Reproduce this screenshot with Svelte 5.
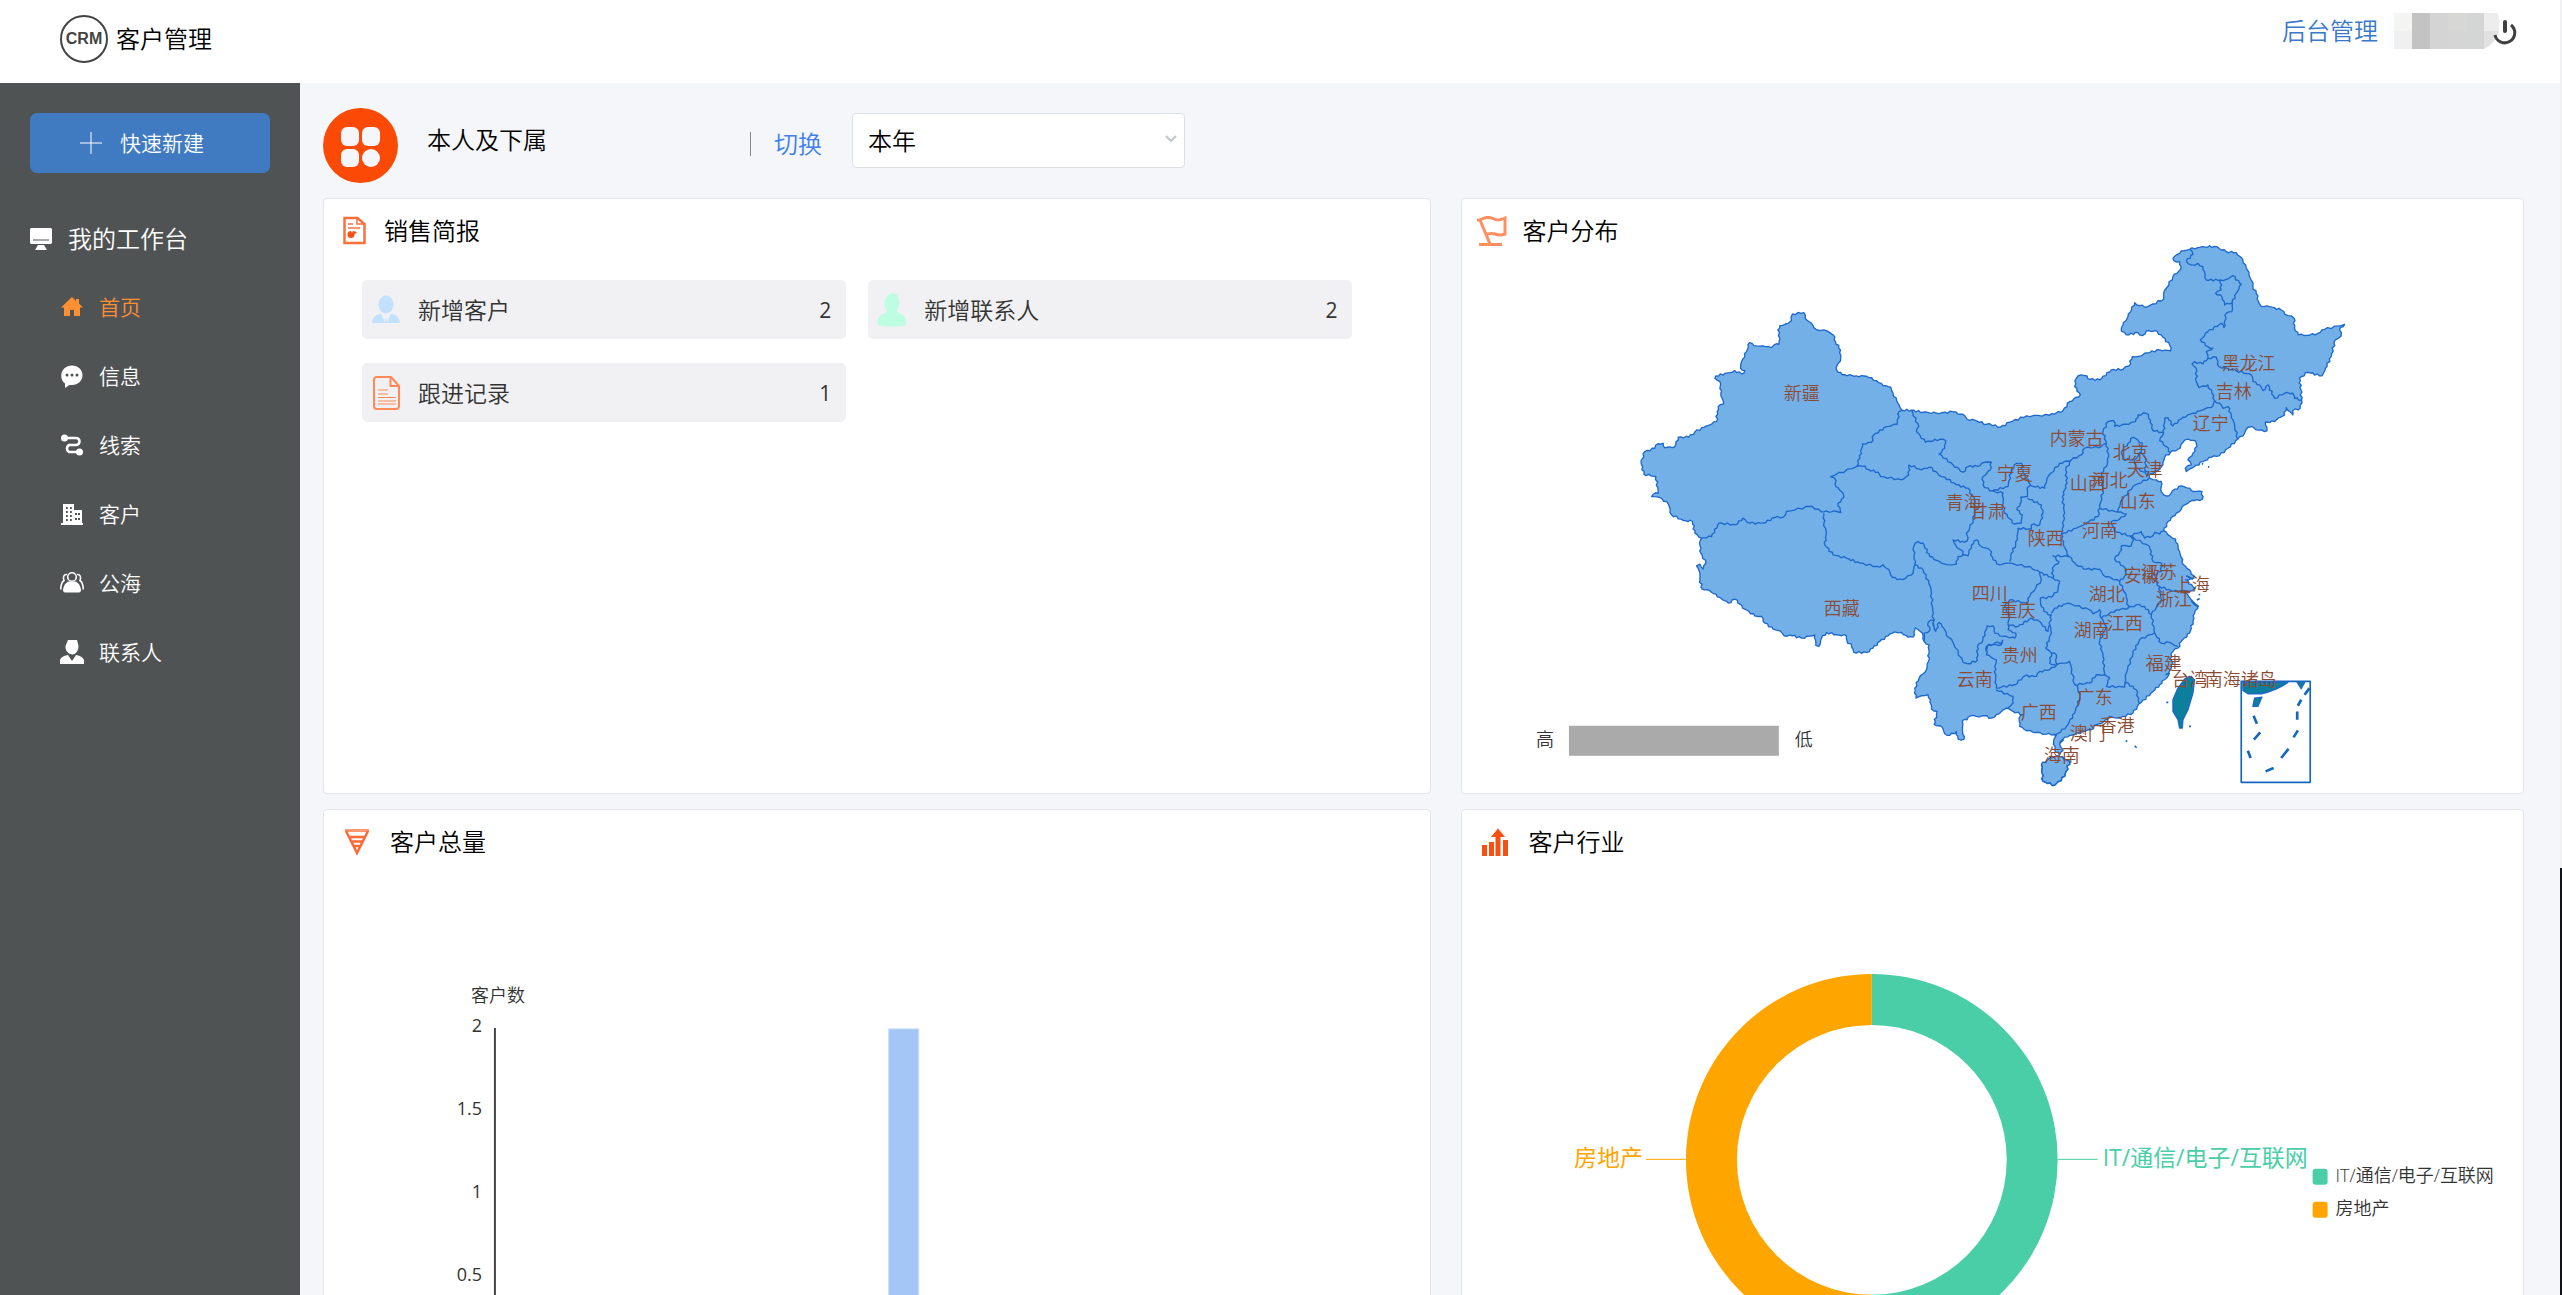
<script lang="ts">
	type Point = [number, number];
	type Run = [dx: number, dy: number, points: string];

	const menu = [
		{ id: 'home', label: '首页' },
		{ id: 'message', label: '信息' },
		{ id: 'clue', label: '线索' },
		{ id: 'customer', label: '客户' },
		{ id: 'pool', label: '公海' },
		{ id: 'contact', label: '联系人' }
	];
	let active = $state('home');

	const stats = [
		{ icon: 'customer', label: '新增客户', value: 2 },
		{ icon: 'contact', label: '新增联系人', value: 2 },
		{ icon: 'record', label: '跟进记录', value: 1 }
	];

	const ranges = ['本年', '本季度', '本月', '本周'];
	let range = $state('本年');

	const ticks = [2, 1.5, 1, 0.5, 0];

	const industries = [
		{ name: 'IT/通信/电子/互联网', color: '#4acea7' },
		{ name: '房地产', color: '#ffa500' }
	];

	const provinces: [string, number, number][] = [
		['新疆', 340, 147],
		['西藏', 380, 362],
		['青海', 502, 256],
		['甘肃', 526, 265],
		['宁夏', 553, 227],
		['内蒙古', 615, 192],
		['北京', 669, 206],
		['天津', 683, 223],
		['山西', 626, 237],
		['河北', 648, 234],
		['山东', 676, 255],
		['黑龙江', 787, 117],
		['吉林', 772, 145],
		['辽宁', 749, 177],
		['河南', 638, 284],
		['陕西', 584, 292],
		['四川', 528, 347],
		['重庆', 556, 364],
		['湖北', 645, 348],
		['安徽', 680, 329],
		['江苏', 697, 326],
		['上海', 730, 338],
		['浙江', 712, 353],
		['江西', 663, 377],
		['湖南', 630, 384],
		['贵州', 558, 409],
		['云南', 513, 433],
		['福建', 702, 417],
		['台湾', 728, 433],
		['南海诸岛', 779, 433],
		['广东', 633, 451],
		['广西', 577, 466],
		['香港', 655, 479],
		['澳门', 626, 487],
		['海南', 600, 509]
	];

	// Map geometry is kept in tiles; each run carries the offset of its tile.
	const W: [number, number] = [0, 0];
	const N: [number, number] = [1020, 0];
	const S: [number, number] = [1020, 810];
	const Y: [number, number] = [780, 1080];

	const outline: Run[] = [
		[...W, '63,697 75,665 105,655 107,646 130,640 135,654 165,650 175,622 207,622 225,606 260,588 290,575 292,545 300,525 311,522 303,490 300,455 285,445 288,438 330,428 345,422 350,428 372,430 375,422 362,415 363,402 380,365 389,338 410,348 437,350 455,353 463,345 477,343 480,325 474,300 480,287 505,280 515,272 518,252 552,248 556,265 575,280 582,293 600,302 612,300 630,308 640,315 647,335 662,360 662,393 650,410 655,427 675,434 710,438 740,439 770,452 790,467 813,472 820,490 835,520 847,541 875,541 910,547 950,550 1000,546'],
		[...N, '15,557 22,568 45,571 80,583 107,585 122,592 150,577 200,558 270,556 310,542 330,515 362,495 345,470 350,445 365,435 382,438 385,447 420,450 455,420 490,418 508,408 518,380 545,378 555,370 600,360 633,363 630,345 605,315 585,302 560,303 548,317 535,308 500,315 485,303 490,285 505,260 525,218 540,227 562,231 580,222 612,208 612,190 640,140 663,118 660,95 643,92 640,85 665,63 690,58 720,52 765,49 800,65 830,68 850,90 863,120 875,150 880,170 890,190 897,215 905,229 930,230 965,240 985,257 1003,264 1005,295 1016,315 1050,316 1075,310 1095,298 1155,283 1140,300 1145,318 1127,330 1115,380 1098,415 1087,438 1045,427 1020,445 1024,480 1026,510 1022,535 1000,542 1000,555 990,545 980,533 975,555 955,565 945,575 917,577 922,603 890,600 878,590 865,592 855,610 835,628 805,655 780,677 755,682 730,695 697,715 680,725 677,715 695,705 685,690 700,670 712,650 708,633 685,628 670,637 662,655 632,668 615,682 610,705 595,722 568,735 570,745 590,750 605,755 605,785 612,795 628,798 645,778 665,768 690,775 700,785 727,785 728,808 705,812 690,815 675,825 665,838 650,850 625,875'],
		[...S, '613,93 630,108 648,118 660,155 672,195 690,210 703,235 678,240 705,265 690,275 672,272 683,283 700,305 715,318 705,340 700,365 690,400 665,425 655,445 640,455 630,478 640,490 632,510 628,525 615,540 600,555 580,575 545,608 533,620 520,640 490,650 470,655 450,650 430,668 410,675 395,690 375,695 330,707 310,718 300,735 310,752 300,765 285,750 282,725 290,705 260,703 200,693 180,680 178,655 190,645 160,635'],
		[...Y, '380,355 365,365 350,375 335,385 315,378 290,380 272,378 262,390 248,393 248,420 253,448 235,448 230,425 210,437 195,432 185,410 163,404 170,375 172,365 155,358 152,330 145,315 125,318 108,325 105,295 118,265 140,240 146,215 148,165 133,155 128,130 115,120 107,114 100,142 85,142 65,128 45,126 25,138 0,155'],
		[...W, '760,1255 740,1268 702,1268 695,1243 683,1240 680,1218 650,1215 620,1208 605,1225 597,1250 588,1247 585,1215 545,1225 510,1215 493,1218 480,1203 460,1198 430,1175 425,1160 405,1158 375,1138 345,1108 325,1120 300,1103 270,1083 247,1078 240,1050 240,1030 230,1008 240,1003 250,1018 258,1000 243,970 240,935 245,925 225,910 218,875 190,872 155,855 145,822 120,803 95,800 100,793 115,790 108,740 72,733 63,697']
	];

	const borders: Run[][] = [
		[[...W, '245,925 275,920 297,880 348,885 368,865 390,880 430,880 465,863 490,862 500,845 570,830 612,846 650,845 663,848 655,820 672,803 665,785 648,770 645,745 632,740 710,710 720,685 728,642 755,637 762,615 800,590 832,583 838,545 847,541']],
		[[...W, '612,850 612,880 620,910 615,945 640,975 680,985 720,1000 780,1012 790,1005 810,1025 818,1043 840,1048 858,1045 880,1030 885,1005 910,1020 932,1070 938,1130 942,1190']],
		[[...W, '710,710 735,708 740,718 775,727 783,740 845,750 867,735 868,705 905,720 930,712 965,740 975,742 1010,765 1045,775 1055,795 1062,800 1068,840 1060,870 1050,895 1040,910 1045,925 1035,937 1000,930 1010,950 1030,965 1025,980']],
		[[...W, '885,1005 882,950 895,935 910,940 930,980 965,1000 990,1005 1010,1003 1015,980 1030,975 1045,978 1055,945 1070,930 1082,948 1110,960'], [...S, '100,180 120,195 145,190 205,200 240,217 280,235']],
		[[...W, '875,541 897,590 890,605 917,637 960,628 978,632 975,655 958,672 1000,705 1030,727 1045,710'], [...N, '60,708 75,697 95,697 92,720 70,740 70,765 90,783 105,785 130,790 130,820 135,850 165,883 185,880 188,855 172,840 185,815 183,800']],
		[[...N, '98,783 145,770 155,720 170,700 185,700 190,730 213,765 202,775 203,800 183,803']],
		[[...N, '203,805 245,825 250,850 240,885 215,885 215,898 175,895'], [...S, '172,110 168,135 155,160 150,185']],
		[[...N, '213,768 255,775 262,745 300,700 335,690 365,675 375,655 425,650 440,640 430,605 445,575 462,572 465,590 500,583 528,575 535,555 560,550 573,570 578,600 612,610 615,565 625,563 640,588 670,562 700,550 730,540 760,528 765,512 757,490 745,465 718,473 710,455 710,415 697,402 705,395 730,402 745,385']],
		[[...N, '335,690 318,720 322,760 308,800 315,850 308,895'], [...S, '305,103 313,140 328,170 350,195 380,208 420,208 430,225 480,245 500,290 505,325']],
		[[...N, '612,610 600,632 620,650 632,668']],
		[[...N, '765,512 785,525 790,535 805,530 820,570 835,628']],
		[[...N, '745,385 740,365 760,355 745,350 722,330 745,305 785,280 793,293 800,250 817,245 818,218 795,225 787,200 768,190 785,180 782,150 740,150 730,110 715,100 695,105 680,93 700,73 690,58']],
		[[...N, '782,150 800,148 820,137 845,163 830,190 818,218']],
		[[...N, '745,385 770,382 778,410 830,422 875,435 880,455 900,465 910,482 925,465 945,505 975,490 1000,490 1005,505 1026,510']],
		[[...N, '440,640 447,680 440,710 425,730 430,780 420,835 415,860 380,880 360,890'], [...S, '350,85 305,103']],
		[[...N, '420,835 475,847 483,815 520,770 568,745']],
		[[...N, '475,847 500,852 480,868 455,875'], [...S, '465,95 510,108 545,95 555,115 580,108 585,98 600,103 613,93']],
		[[...N, '485,665 505,640 520,622 548,640 545,665 525,690 490,688 485,665']],
		[[...N, '545,665 560,690 555,715 568,735']],
		[[...N, '525,690 530,715 568,735']],
		[[...S, '480,245 500,225 497,205 465,178 485,150 485,138 515,138 522,120 510,108 570,140 580,185 605,190 605,215 575,230 600,260 640,275 672,272']],
		[[...S, '328,170 280,168 298,185 278,205 280,235 300,245 295,270 275,292 242,295 245,320 265,345 275,345 270,375 275,400 258,445 275,460 270,490 290,500']],
		[[...S, '275,340 285,325 325,310 390,330 400,342 420,330 425,355 470,330 505,325 530,315 555,320 575,345 585,400 605,430 630,428 655,440']],
		[[...S, '600,260 605,300 575,345']],
		[[...S, '585,398 540,420 520,460 500,520 495,550']],
		[[...S, '425,355 440,380 420,425 430,470 435,525 450,535 440,560 495,562 500,548 530,570 538,610']],
		[[...S, '435,525 410,525 390,550 345,555 330,485 310,490 290,495 270,510 240,515 230,530 195,528 165,555 125,562 110,565 108,540 105,500 110,480 80,465 80,440 105,430 130,428']],
		[[...S, '275,460 290,465 288,480 295,495']],
		[[...S, '108,570 160,590 160,610 140,628']],
		[[...S, '350,555 362,590 345,640 320,680 285,710']],
		[[...Y, '160,100 168,125 178,98 192,115 205,142 215,148 250,218 265,222 293,212 293,170 310,150 322,108 340,108 345,130 370,140 405,145 408,130 385,120 385,105']],
		[[...Y, '370,150 365,165 325,165 318,185']],
		[[...Y, '162,90 145,98 150,122 133,130 133,155']],
		[[...S, '240,217 245,240 210,290 200,310 150,300 135,320 150,350 145,375 175,380 215,355 240,365 265,395 270,375']],
		[[...S, '245,795 275,772 300,770 330,785 315,830 285,857 250,845 245,795']]
	];

	const island: Run[] = [
		[...S, '690,530 705,540 700,580 685,630 670,660 668,685 660,685 655,660 640,635 640,600 655,565 675,538 690,530']
	];

	function points(runs: Run[]): Point[] {
		return runs.flatMap(([dx, dy, list]) =>
			list.split(' ').map((pair): Point => {
				const [x, y] = pair.split(',').map(Number);
				return [x + dx, y + dy];
			})
		);
	}

	// Breaks long straight segments into a slightly ragged line.
	function rough(runs: Run[]): string {
		const list = points(runs);
		const out: string[] = [`M${list[0]}`];
		for (let i = 1; i < list.length; i++) {
			const [ax, ay] = list[i - 1];
			const [bx, by] = list[i];
			const len = Math.hypot(bx - ax, by - ay) || 1;
			const steps = Math.min(6, Math.floor(len / 7));
			for (let s = 1; s < steps; s++) {
				const t = s / steps;
				const off = Math.sin(ax * 12.9 + by * 7.3 + s * 91.7) * 3;
				const x = ax + (bx - ax) * t - ((by - ay) / len) * off;
				const y = ay + (by - ay) * t + ((bx - ax) / len) * off;
				out.push(`L${x.toFixed(1)},${y.toFixed(1)}`);
			}
			out.push(`L${bx},${by}`);
		}
		return out.join('');
	}

	const landPath = rough(outline);
	const hainanPath = rough(borders[borders.length - 1]);
	const borderPath = borders.map(rough).join('');
	const islandPath = `M${points(island).join('L')}z`;
</script>

{#snippet menuIcon(id: string)}
	<svg class="menu-icon" viewBox="0 0 24 24" fill="currentColor" aria-hidden="true">
		{#if id === 'home'}
			<path d="M12 2 1 12.500h3V21h6v-6h4v6h6v-8.500h3L19 8.500V4h-3v2z" />
		{:else if id === 'message'}
			<path d="M12 1.500c6 0 10.500 4.300 10.500 9.700S18 21 12 21c-1 0-2 0-3 .2L5 24v-4.500c-2.500-1.800-4-5-3.700-8.300C1.500 5.800 6 1.500 12 1.500z" />
			<g fill="#505354">
				<circle cx="7" cy="11" r="1.500" />
				<circle cx="12" cy="11" r="1.500" />
				<circle cx="17" cy="11" r="1.500" />
			</g>
		{:else if id === 'clue'}
			<circle cx="4.500" cy="5" r="3.500" />
			<circle cx="19.500" cy="19" r="3.500" />
			<path d="M5 5h11a3.500 3.500 0 0 1 0 7H9a4 4 0 0 0 0 7h10" fill="none" stroke="currentColor" stroke-width="2.600" />
		{:else if id === 'customer'}
			<path d="M3 2h11v6h8v13h1v2H1v-2h2z" />
			<path d="M6 5h1.800v2H6zm4 0h1.800v2H10zM6 9h1.800v2H6zm4 0h1.800v2H10zm-4 4h1.800v2H6zm4 0h1.800v2H10zm-4 4h1.800v2H6zm4 0h1.800v2H10zm5-6h2v2h-2zm3 0h2v2h-2zm-3 5h2v2h-2zm3 0h2v2h-2z" fill="#505354" />
		{:else if id === 'pool'}
			<g fill="none" stroke="currentColor" stroke-width="1.600">
				<circle cx="12" cy="6" r="4.300" />
				<path d="M7 3.500C4 3 2.500 6 4 9.500 1.500 11 .8 14 .8 18.500M17 3.500c3-.5 4.500 2.500 3 6 2.500 1.500 3.200 4.500 3.200 9" />
			</g>
			<path d="M3 20c0-5 3-9 6-9.500h6c3 .5 6 4.500 6 9.500l-1.500 1.500h-15z" />
		{:else}
			<path d="M8 0h9l1.500 6c0 4-2 8-6 8.500C8.500 14 5 11 5.500 6z" />
			<path d="M0 24v-4c1-3 5-4.500 8-5l4 6 4-6c3 .5 7 2 8 5v4z" />
		{/if}
	</svg>
{/snippet}

{#snippet statIcon(id: string)}
	<svg class="stat-icon" viewBox="0 0 30 36" aria-hidden="true">
		{#if id === 'customer'}
			<g fill="#c2e0ff">
				<ellipse cx="15" cy="12.500" rx="7.500" ry="9" />
				<path d="M1 31c.3-5 3-8 9-9.500l4 9 1-6 1 6 4-9c6 1.500 8.700 4.500 9 9.500z" />
			</g>
		{:else if id === 'contact'}
			<path d="M12 2.500c2-2 8-1.500 9 2 1 4 3 8-1 13.500-1 4 9.500 3 9.500 12 0 4-3 4.500-14.500 4.500S.5 34 .5 30c0-9 10.500-8 9.500-12-4-5.500-4-10 2-15.500z" fill="#bdfde2" />
		{:else}
			<g fill="none" stroke="#ff8a57" stroke-width="2">
				<path d="M6 2h14l8 9v20a3 3 0 0 1-3 3H6a3 3 0 0 1-3-3V5a3 3 0 0 1 3-3z" />
				<path d="M19.500 2v9H28" />
				<path d="M7 15h10M7 19h10M7 22.500h18M7 26h18M7 29h18" stroke-width="1.200" />
			</g>
		{/if}
	</svg>
{/snippet}

<div class="window">
	<div class="app">
		<header class="topbar">
			<div class="brand">
				<span class="brand-mark">CRM</span>
				<span>客户管理</span>
			</div>
			<div class="account">
				<a href="#admin">后台管理</a>
				<svg class="account-name" viewBox="0 0 106 36" aria-hidden="true">
					<path d="M0 36V6q1-6 6-6v36z" fill="#fbfdfe" />
					<path d="M6 0h18v18H6z" fill="#f4f4f3" />
					<path d="M6 18h18v18H6z" fill="#f0f0f0" />
					<path d="M24 0h18v36H24z" fill="#c3c3c3" />
					<path d="M42 0h18v36H42z" fill="#d4d4d4" />
					<path d="M60 0h18v18H60z" fill="#d7d7d5" />
					<path d="M60 18h18v18H60z" fill="#d5d5d5" />
					<path d="M78 0h18v36H78z" fill="#d4d6d6" />
					<path d="M96 0h14q2 9 1 18H96z" fill="#ededed" />
					<path d="M96 18h15q-4 13-15 18z" fill="#e1e1e1" />
				</svg>
				<button class="logout" aria-label="退出">
					<svg viewBox="0 0 22 26" fill="none" stroke="#404040" aria-hidden="true">
						<path d="M11 4v9" stroke-width="4" stroke-linecap="round" />
						<path d="M17 7a10 10 0 1 1-16 10" stroke-width="3" />
					</svg>
				</button>
			</div>
		</header>

		<nav class="sidebar">
			<button class="create">
				<svg viewBox="0 0 22 22" stroke="#fff" stroke-width="1" aria-hidden="true">
					<path d="M11 0v22M0 11h22" />
				</svg>
				快速新建
			</button>
			<h2 class="menu-title">
				<svg viewBox="0 0 22 22" aria-hidden="true">
					<path d="M1 0h20l1 1v14l-1 1H1l-1-1V1z" fill="#fff" />
					<path d="M3 12h16" stroke="#505354" stroke-width="1" />
					<path d="M8 17h6l3 5H5z" fill="#fff" />
				</svg>
				我的工作台
			</h2>
			<ul class="menu">
				{#each menu as item (item.id)}
					<li>
						<a
							href="#{item.id}"
							class:active={active === item.id}
							onclick={() => (active = item.id)}
						>
							{@render menuIcon(item.id)}
							{item.label}
						</a>
					</li>
				{/each}
			</ul>
		</nav>

		<main class="content">
			<div class="toolbar">
				<svg class="scope-icon" viewBox="0 0 75 75" aria-hidden="true">
					<circle cx="37.500" cy="37.500" r="37.500" fill="#fa4a05" />
					<g fill="#f5f6fa">
						<rect x="18" y="19" width="18" height="19" rx="6" />
						<rect x="39" y="19" width="18" height="19" rx="6" />
						<rect x="18" y="41" width="18" height="18" rx="6" />
						<rect x="39" y="41" width="18" height="18" rx="9" />
					</g>
				</svg>
				<span class="scope">本人及下属</span>
				<a class="switch" href="#switch">切换</a>
				<div class="range">
					<select aria-label="时间范围" bind:value={range}>
						{#each ranges as item (item)}
							<option>{item}</option>
						{/each}
					</select>
					<svg viewBox="0 0 12 8" fill="none" stroke="#c0c4cc" stroke-width="2" aria-hidden="true">
						<path d="m1 1 5 5 5-5" />
					</svg>
				</div>
			</div>

			<div class="cards">
				<section class="card">
					<h3 class="card-head">
						<svg class="card-icon" viewBox="0 0 30 30" aria-hidden="true">
							<path d="M5.500 2h13l7 6v19h-20z" fill="none" stroke="#fd6f3f" stroke-width="2.500" />
							<path d="M18 2v6h8M9 8h5M9 12h12" fill="none" stroke="#fd6f3f" stroke-width="1.500" />
							<path d="M12 15a3.500 3.500 0 1 0 3.500 3.500L18 16l-4-1-1 2z" fill="#fa5015" />
						</svg>
						销售简报
					</h3>
					<ul class="stats">
						{#each stats as stat (stat.label)}
							<li>
								{@render statIcon(stat.icon)}
								<span>{stat.label}</span>
								<b>{stat.value}</b>
							</li>
						{/each}
					</ul>
				</section>

				<section class="card">
					<h3 class="card-head">
						<svg class="card-icon" viewBox="0 0 30 30" fill="none" stroke="#ff8f60" stroke-width="3" aria-hidden="true">
							<path d="M0 4h3l10 24M2 28.500h23M3 4c6-4 10-3 14-1s7 1 11-1v16c-5 2-7 1-10 0s-6-1-10 1" />
						</svg>
						客户分布
					</h3>
					<svg class="chart" viewBox="0 0 1061 546" role="img" aria-label="客户分布">
						<g class="map" transform="translate(158 -17) scale(0.3333)">
							<path class="land" d={landPath} />
							<path class="land" d={hainanPath} />
							<path class="border" d={borderPath} />
							<path class="far" d={islandPath} />
							<g transform="translate(1020 810)">
								<rect class="frame" x="845" y="545" width="207" height="303" />
								<path class="far" d="M850 572v-24h135q-35 24-80 34h-40zM1013 548h22l-10 19zM885 595l22-3-12 28h-15z" />
								<path class="dash" d="m882 648 10 24m10 26-19 22m-18 33 8 22m45 40 24-10m23-30 22-28m15-34 13-21m-2-57v25m2-42 10-18m10-15 15-20" />
								<path class="dot" d="M620 608h6m62 72h6M525 738l6 6m-33-21 5 2M727-108h4m14 9h4M705 315l12 6m-5-20 8-5m-40-68 20 10m-5 65 10 12m12-30 5-1M618 525l12-5M300 730l12-10" />
							</g>
						</g>
						<g class="provinces">
							{#each provinces as [name, x, y] (name)}
								<text {x} y={y + 6}>{name}</text>
							{/each}
						</g>
						<rect x="107" y="479" width="210" height="30" fill="#aaa" />
						<text class="label middle" x="83" y="499">高</text>
						<text class="label middle" x="342" y="499">低</text>
					</svg>
				</section>

				<section class="card">
					<h3 class="card-head wide">
						<svg class="card-icon" viewBox="0 0 36 30" fill="none" stroke="#fd6a35" stroke-width="2" aria-hidden="true">
							<path d="M6 3.500h24" stroke-width="3" opacity="0.7" />
							<path d="M7 4l11 22L29 4M10 10h16M13 14.500h10M15 19h6" stroke-width="2.500" />
						</svg>
						客户总量
					</h3>
					<svg class="chart" viewBox="0 0 1107 560" role="img" aria-label="客户总量">
						<text class="label middle" x="174" y="144">客户数</text>
						{#each ticks as tick, i (tick)}
							<text class="tick" x="158" y={174 + i * 83}>{tick}</text>
						{/each}
						<path d="M171 170v332" stroke="#444" stroke-width="2" />
						<rect x="565" y="171" width="30" height="331" fill="#a3c6f6" stroke="#c5dbf8" />
					</svg>
				</section>

				<section class="card">
					<h3 class="card-head wide">
						<svg class="card-icon" viewBox="0 0 36 30" fill="#fa4f12" aria-hidden="true">
							<path d="M5 18h5v11H5zM12 15h5v14h-5zM18.500 10h5v19h-5zM26 13h5v16h-5zM21 1.500l7 8.500H14z" />
						</svg>
						客户行业
					</h3>
					<svg class="chart" viewBox="0 0 1061 560" role="img" aria-label="客户行业">
						<path d="M410 116a186 186 0 0 1 0 372v-51a135 135 0 0 0 0-270z" fill="#4acea7" />
						<path d="M410 116a186 186 0 0 0 0 372v-51a135 135 0 0 1 0-270z" fill="#ffa500" />
						<path d="M596 301.500h40" stroke="#4acea7" />
						<path d="M184 301.500h40" stroke="#ffa500" />
						<text class="slice" x="641" y="308" fill="#4acea7">{industries[0].name}</text>
						<text class="slice end" x="181" y="308" fill="#ffa500">{industries[1].name}</text>
						{#each industries as item, i (item.name)}
							<rect x="851" y={311 + i * 33} width="15" height="16" rx="3" fill={item.color} />
							<text class="label" x="874" y={324 + i * 33}>{item.name}</text>
						{/each}
					</svg>
				</section>
			</div>
		</main>
	</div>
	<div class="track"><div class="thumb"></div></div>
</div>

<style>
	:global(body) {
		margin: 0;
	}

	.window {
		display: flex;
		height: 100vh;
		overflow: hidden;
		background: #f5f6fa;
		color: #000;
		font: 350 24px/32px 'Open Sans', 'Noto Sans CJK SC', sans-serif;
	}

	.app {
		flex: 1;
		min-width: 0;
		display: grid;
		grid-template-columns: 300px 1fr;
		grid-template-rows: 83px 1fr;
	}

	.track {
		width: 2px;
		display: flex;
		align-items: flex-end;
		background: #f1f1f3;
	}

	.thumb {
		width: 100%;
		height: 33%;
		background: #111318;
	}

	a {
		color: inherit;
		text-decoration: none;
	}

	button,
	select {
		font: inherit;
	}

	ul,
	h2,
	h3 {
		margin: 0;
		padding: 0;
		list-style: none;
		font: inherit;
	}

	.topbar {
		grid-column: 1 / -1;
		display: flex;
		justify-content: space-between;
		align-items: flex-start;
		box-sizing: border-box;
		padding: 13px 44px 0 60px;
		background: #fff;
	}

	.brand {
		display: flex;
		align-items: center;
		gap: 8px;
		margin-top: 2px;
	}

	.brand-mark {
		box-sizing: border-box;
		width: 48px;
		height: 48px;
		border: 2px solid #444;
		border-radius: 50%;
		color: #444;
		font: 700 16px/44px 'Liberation Sans Narrow', 'Liberation Sans', sans-serif;
		text-align: center;
	}

	.account {
		display: flex;
		align-items: center;
	}

	.account a {
		color: #3a78c9;
	}

	.account-name {
		width: 106px;
		height: 36px;
		margin-left: 10px;
		overflow: visible;
	}

	.logout {
		display: flex;
		width: 22px;
		height: 26px;
		padding: 0;
		border: 0;
		background: none;
	}

	.logout svg {
		width: 22px;
		height: 26px;
		overflow: visible;
	}

	.sidebar {
		padding: 30px;
		background: #505354;
		color: #fff;
	}

	.create {
		display: flex;
		align-items: center;
		justify-content: center;
		gap: 18px;
		width: 100%;
		height: 60px;
		padding: 0 16px 0 0;
		border: 0;
		border-radius: 7px;
		background: #407bc1;
		color: #fff;
		font-size: 21px;
	}

	.create svg {
		width: 22px;
		height: 22px;
	}

	.menu-title {
		display: flex;
		align-items: center;
		gap: 16px;
		height: 40px;
		margin: 46px 0 13px;
	}

	.menu-title svg {
		width: 22px;
		height: 22px;
	}

	.menu a {
		display: flex;
		align-items: center;
		gap: 15px;
		height: 69px;
		padding-left: 30px;
		font-size: 21px;
	}

	.menu a.active {
		color: #ff8f33;
	}

	.menu-icon {
		width: 24px;
		height: 24px;
	}

	.content {
		min-width: 0;
		overflow: hidden;
		padding: 25px 36px 0 23px;
	}

	.toolbar {
		display: flex;
		align-items: flex-start;
		height: 75px;
		margin-bottom: 15px;
	}

	.scope-icon {
		width: 75px;
		height: 75px;
	}

	.scope {
		width: 323px;
		margin-left: 29px;
		line-height: 64px;
	}

	.switch {
		margin: 24px 30px 0 0;
		padding-left: 23px;
		border-left: 1px solid #888;
		color: #4080e8;
		line-height: 24px;
	}

	.range {
		position: relative;
		margin-top: 5px;
	}

	.range select {
		appearance: none;
		box-sizing: border-box;
		width: 333px;
		height: 55px;
		padding: 0 30px 0 15px;
		border: 1px solid #dcdfe6;
		border-radius: 4px;
		background: #fff;
		color: #000;
	}

	.range svg {
		position: absolute;
		top: 22px;
		right: 8px;
		width: 12px;
		height: 8px;
		pointer-events: none;
	}

	.cards {
		display: grid;
		grid-template-columns: 1109fr 1063fr;
		gap: 15px 30px;
	}

	.card {
		border: 1px solid #e4e6eb;
		border-radius: 4px;
		background: #fff;
	}

	.card-head {
		display: flex;
		align-items: center;
		gap: 15px;
		padding: 16px 15px 0;
	}

	.card-icon {
		width: 30px;
		height: 30px;
	}

	.wide .card-icon {
		width: 36px;
	}

	.stats {
		display: grid;
		grid-template-columns: 1fr 1fr;
		gap: 24px 22px;
		padding: 33px 78px 0 38px;
	}

	.stats li {
		display: flex;
		align-items: center;
		height: 59px;
		padding: 0 15px 0 9px;
		border-radius: 5px;
		background: #f1f1f4;
		color: #333;
		font-size: 23px;
	}

	.stats b {
		margin-left: auto;
		font-size: 21px;
		font-weight: 400;
	}

	.stat-icon {
		width: 30px;
		height: 36px;
		margin-right: 17px;
	}

	.chart {
		display: block;
		width: 100%;
		overflow: visible;
	}

	.map path,
	.map rect {
		stroke: #1d68cb;
		stroke-width: 4;
		stroke-linejoin: round;
	}

	.map .land {
		fill: #74b0e8;
	}

	.map .border,
	.map .frame,
	.map .dash,
	.map .dot {
		fill: none;
	}

	.map .far {
		fill: #0b7f9c;
	}

	.map .frame,
	.map .dot {
		stroke: #1567bd;
		stroke-width: 5;
	}

	.map .dash {
		stroke: #1567bd;
		stroke-width: 8;
	}

	.provinces text {
		fill: #8b4a33;
		font-size: 18px;
		text-anchor: middle;
	}

	.label,
	.tick {
		fill: #333;
		font-size: 18px;
	}

	.tick {
		font-weight: 400;
		text-anchor: end;
	}

	.slice {
		font-size: 23px;
		font-weight: 400;
	}

	.middle {
		text-anchor: middle;
	}

	.end {
		text-anchor: end;
	}
</style>
